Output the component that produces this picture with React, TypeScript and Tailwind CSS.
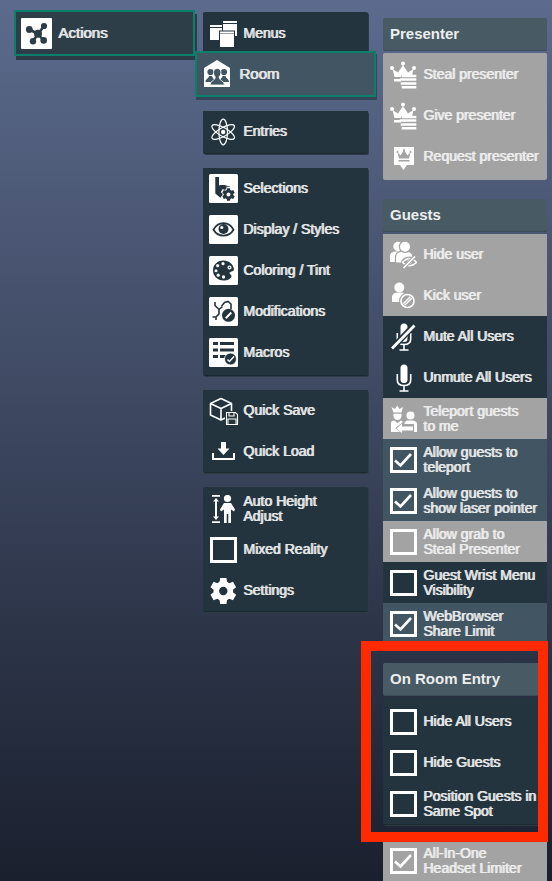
import type { ReactNode } from 'react';

const DARK = '#24343e';
const GRAY = '#a3a3a3';

function Icon({ children, className = 'size-7', size = 28 }: { children: ReactNode; className?: string; size?: number }) {
  return (
    <svg viewBox={`0 0 ${size} ${size}`} className={`${className} shrink-0`} fill="#fff" aria-hidden="true">
      {children}
    </svg>
  );
}

function Tile({ children }: { children: ReactNode }) {
  return (
    <Icon size={29} className="size-[29px] -mr-px">
      <rect width="29" height="29" rx="1.5" />
      {children}
    </Icon>
  );
}

const GEAR_TEETH = [0, 60, 120, 180, 240, 300];

function Gear({ cx, cy, r, hole, color, holeColor }: { cx: number; cy: number; r: number; hole: number; color: string; holeColor: string }) {
  return (
    <g transform={`translate(${cx} ${cy})`}>
      {GEAR_TEETH.map((a) => (
        <path
          key={a}
          transform={`rotate(${a})`}
          fill={color}
          d={`M${-r * 0.3} ${-r * 0.6}L${-r * 0.24} ${-r}H${r * 0.24}L${r * 0.3} ${-r * 0.6}Z`}
        />
      ))}
      <circle r={r * 0.76} fill={color} />
      <circle r={hole} fill={holeColor} />
    </g>
  );
}

const ActionsIcon = () => (
  <Icon size={31} className="size-[31px]">
    <rect width="31" height="31" rx="1" />
    <g stroke="#2d3d48" strokeWidth="2.6" fill="#2d3d48">
      <path d="M8.5 11.5L17 16L23 8M12 23L17 16L22.5 22.5" fill="none" />
      <g stroke="none">
        <circle cx="8.3" cy="11.5" r="3.4" />
        <circle cx="23" cy="8" r="3.1" />
        <circle cx="12" cy="23.2" r="3.2" />
        <circle cx="22.7" cy="22.4" r="3.3" />
        <circle cx="17" cy="15.7" r="4" />
      </g>
    </g>
  </Icon>
);

const MenusIcon = () => (
  <Icon>
    <path d="M1 5H14V20H1ZM14 1H28V16H14Z" />
    <path d="M1 7.500H13M14 3.500H28" stroke={DARK} />
    <path d="M13.500 4V11" stroke={DARK} />
    <rect x="10" y="10.500" width="16" height="17.500" fill={DARK} />
    <path d="M11 11.500H25V27H11Z" />
    <path d="M11 13.500H25" stroke="#9ba3a8" />
  </Icon>
);

const RoomIcon = () => (
  <Icon>
    <path d="M0 8L13 0L26 8V27H0Z" />
    <g fill="#425563">
      <circle cx="6.5" cy="12" r="3.1" />
      <path d="M1.5 22C1.5 18.5 5 18.5 5 16H8C8 18 11 19 11 22Z" />
      <circle cx="20" cy="12" r="3.1" />
      <path d="M15.500 22C15.500 18.500 18.500 18.500 18.500 16H21.500C21.500 18 25 19 25 22Z" />
      <path d="M6 25C6 20.500 11.300 21 11.300 17C8 13 9.500 8.500 13.200 8.500S18.500 13 15 17C15 21 20.500 20.500 20.500 25Z" stroke="#fff" strokeWidth=".8" />
    </g>
  </Icon>
);

const AtomIcon = () => (
  <Icon>
    <g fill="none" stroke="#fff" strokeWidth="1.200" transform="translate(14.200 14)">
      <ellipse rx="4.300" ry="12.800" />
      <ellipse rx="4.300" ry="12.800" transform="rotate(60)" />
      <ellipse rx="4.300" ry="12.800" transform="rotate(-60)" />
      <circle r="2.200" fill="#fff" stroke="none" />
    </g>
  </Icon>
);

const SelectionsIcon = () => (
  <Tile>
    <path fill={DARK} d="M6.300 3H10V11.500C14 10.500 17 11.500 21 12.500V23.500H11L6.300 19.500Z" />
    <Gear cx={19.5} cy={20.5} r={7.8} hole={0} color="#fff" holeColor="#fff" />
    <Gear cx={19.5} cy={20.5} r={6.3} hole={2} color={DARK} holeColor="#fff" />
  </Tile>
);

const EyeIcon = () => (
  <Tile>
    <path d="M4.500 14.700C9 6 20 6 24.500 14.700C20 22.500 9 22.500 4.500 14.700Z" fill="none" stroke={DARK} strokeWidth="1.800" />
    <circle cx="14.500" cy="14" r="5" fill={DARK} />
    <circle cx="12.800" cy="12.500" r="1.500" />
  </Tile>
);

const PaletteIcon = () => (
  <Tile>
    <path fill={DARK} d="M14.500 4.500C8 4.500 4 9 4 14.500S8.500 24.500 14.500 24.500C19 24.500 22.500 22.500 22.500 20C22.500 18.500 20.500 18.500 20.500 17C20.500 15.500 25 16 25 13C24 8 20 4.500 14.500 4.500Z" />
    <circle cx="14" cy="7.700" r="1.600" />
    <circle cx="8.700" cy="9.700" r="1.600" />
    <circle cx="7" cy="14.800" r="1.500" />
    <circle cx="9.200" cy="19.200" r="1.600" />
    <circle cx="14.500" cy="21" r="1.700" />
    <circle cx="20.500" cy="11.500" r="2" />
    <circle cx="20.500" cy="11.500" r=".8" fill={DARK} />
  </Tile>
);

const ModificationsIcon = () => (
  <Tile>
    <g fill="none" stroke={DARK} strokeWidth="1.600">
      <path d="M6 5V8.500L10 12.500L13.500 9.500M10 12.500V17L7 20H3.500M7 20V23" />
      <path d="M13 9V8.500L15.500 5.500L19 4.500L22 7V12" />
    </g>
    <circle cx="19.500" cy="18.300" r="6.500" fill={DARK} />
    <path d="M16.800 21.300L22.300 15.500" stroke="#fff" strokeWidth="2" />
  </Tile>
);

const MacrosIcon = () => (
  <Tile>
    <path fill={DARK} d="M4 4H9V7H4ZM11 4H25V7H11ZM4 10.500H9V13.500H4ZM11 10.500H25V13.500H11ZM4 17H9V20H4ZM11 17H25V20H11Z" />
    <circle cx="21.500" cy="21" r="6" fill={DARK} stroke="#fff" strokeWidth=".8" />
    <path d="M18.500 21.500L20.500 23.500L25 18.500" fill="none" stroke="#fff" strokeWidth="1.500" />
  </Tile>
);

const QuickSaveIcon = () => (
  <Icon className="size-7 overflow-visible">
    <path d="M12 1.500L22.500 6.500V18L12 23L1.500 18V6.500ZM1.500 6.500L12 11.500L22.500 6.500M12 11.500V23" fill="none" stroke="#fff" strokeWidth="1.600" strokeLinejoin="round" />
    <path d="M16 14H29V29H16Z" fill={DARK} />
    <path d="M17.500 15.500H26.500L28.500 17.500V27.500H17.500ZM20 15.500V19H25V15.500M19 27V22H27V27" fill="none" stroke="#fff" strokeWidth="1.100" />
  </Icon>
);

const QuickLoadIcon = () => (
  <Icon>
    <path d="M12 4H17V10.500H20.500L14.500 17L8.500 10.500H12ZM3 15H5V20H24V15H26V22H3Z" />
  </Icon>
);

const HeightIcon = () => (
  <Icon>
    <path d="M3 0H11V1.800H3ZM3 26.200H11V28H3ZM7 3L10 6.500H8V21.500H10L7 25L4 21.500H6V6.500H4Z" />
    <circle cx="18.500" cy="3.500" r="3.600" />
    <path d="M15 8H22L26 14.500L25 16.500L22 14.500V28H19.300V19H17.700V28H15V14.500L12 16.500L11 14.500Z" />
  </Icon>
);

const SettingsIcon = () => (
  <Icon>
    <Gear cx={14.3} cy={14} r={13} hole={4.2} color="#fff" holeColor={DARK} />
  </Icon>
);

const CrownHandIcon = () => (
  <Icon>
    <circle cx="3" cy="7" r="2" />
    <circle cx="14" cy="2.500" r="2" />
    <circle cx="25" cy="7" r="2" />
    <path d="M3.500 8L9 11.500L14 4L19 11.500L24.500 8L23 14.500H12V16H5.500ZM5 18H12V20.500H5Z" />
    <path d="M14 15H26M12 18.500H26M13 22.500H26M14 26.200H26" stroke="#fff" strokeWidth="2.600" strokeLinecap="square" />
  </Icon>
);

const RequestIcon = () => (
  <Icon>
    <path d="M5 4H25V22H18L14.500 27L11 22H5Z" />
    <g fill={GRAY}>
      <path d="M8.500 9L11.500 12.500L15 7L18.500 12.500L21.500 9L20 15.500H10ZM9.500 17H20.500V18.500H9.500Z" />
      <circle cx="8.500" cy="9" r="1" />
      <circle cx="15" cy="7" r="1" />
      <circle cx="21.500" cy="9" r="1" />
    </g>
  </Icon>
);

const HideUserIcon = () => (
  <Icon>
    <circle cx="9" cy="5.500" r="4.700" />
    <path d="M1 21V15Q1 11 6 10.500H10V21Z" />
    <g stroke={GRAY} strokeWidth="1.200">
      <path d="M6.500 22V15.500Q7 11 12 10.500H19Q23.500 11 24 16V22Z" />
      <circle cx="16" cy="5.800" r="5.600" />
    </g>
    <ellipse cx="20.500" cy="21.500" rx="8.500" ry="6" fill={GRAY} />
    <path d="M13.500 21.500Q20.500 13.500 27.500 21.500Q20.500 28 13.500 21.500Z" fill="none" stroke="#fff" strokeWidth="1.500" />
    <circle cx="20.500" cy="21" r="2.200" />
    <path d="M14.500 27L26 15.500" stroke={GRAY} strokeWidth="3.500" />
    <path d="M14.500 27L26 15.500" stroke="#fff" strokeWidth="1.700" />
  </Icon>
);

const KickUserIcon = () => (
  <Icon>
    <circle cx="10.300" cy="5.500" r="5" />
    <path d="M3 20V14.500Q3.500 11 8 10.500H13Q18 11 18 15V20Z" />
    <circle cx="18.500" cy="19" r="8.500" fill={GRAY} />
    <circle cx="18.500" cy="19" r="6.500" fill="none" stroke="#fff" strokeWidth="1.700" />
    <path d="M15 22.500L22 15.500" stroke="#fff" strokeWidth="3.500" />
    <path d="M15 22.500L22 15.500" stroke={GRAY} strokeWidth="1" />
  </Icon>
);

const Mic = () => (
  <>
    <rect x="11.500" y="0.500" width="7" height="18.500" rx="3.500" />
    <path d="M8.300 10V16Q8.300 21.500 15 21.500Q21.700 21.500 21.700 16V10M15 21.500V27M10.500 27H19.500" fill="none" stroke="#fff" strokeWidth="1.600" />
  </>
);

const MicOffIcon = () => (
  <Icon>
    <Mic />
    <path d="M2.500 26L25.500 2" stroke={DARK} strokeWidth="6" />
    <path d="M3 25.500L25.500 2.500" stroke="#fff" strokeWidth="2.800" />
  </Icon>
);

const MicIcon = () => (
  <Icon>
    <Mic />
  </Icon>
);

const TeleportIcon = () => (
  <Icon>
    <path d="M2.500 2L6 4L8.300 0.500L10.500 4L14 2L12.500 7.500H4.500Z" />
    <path d="M4.500 8.800H12.500V11Q12 15 8.500 15T4.500 11Z" />
    <path d="M2 27V18Q2 15.500 5 15.500L8.500 18L12 15.500L14 17L6.500 23L11 27Z" />
    <circle cx="21.500" cy="10.500" r="4" />
    <path d="M15.500 19V18Q16 15.500 19 15.500H24Q28 16 28 19V27H25V19Z" />
    <path d="M7.500 23.500L13 18.500V21.500H24V25.500H13V28Z" />
  </Icon>
);

type Tone = 'dark' | 'active' | 'disabled';

const TONES: Record<Tone, string> = {
  dark: 'bg-[#24343e] text-[#e6e8e8]',
  active: 'bg-[#425563] text-[#e6e8e8]',
  disabled: 'bg-[#a3a3a3] text-[#ededed]',
};

const THICK = '[text-shadow:1px_0_0_currentColor]';

const ROW = `flex h-[41px] w-full items-center gap-1.5 pl-1.5 text-left text-sm leading-[15px] ${THICK}`;

function Item({ icon, label, tone = 'dark' }: { icon: ReactNode; label: string; tone?: Tone }) {
  return (
    <button type="button" disabled={tone === 'disabled'} className={`${ROW} ${TONES[tone]}`}>
      {icon}
      <span className="whitespace-pre">{label}</span>
    </button>
  );
}

function Check({ label, tone = 'dark', checked = false }: { label: string; tone?: Tone; checked?: boolean }) {
  return (
    <label className={`${ROW} ${TONES[tone]}`}>
      <span className="grid size-7 shrink-0 place-items-center">
        <input
          type="checkbox"
          defaultChecked={checked}
          disabled={tone === 'disabled'}
          className="peer col-start-1 row-start-1 h-[26px] w-[27px] appearance-none border-3 border-white"
        />
        <svg viewBox="0 0 28 28" className="pointer-events-none invisible col-start-1 row-start-1 size-7 peer-checked:visible" aria-hidden="true">
          <path d="M6 14.500L11.500 19.500L22 8" fill="none" stroke="#fff" strokeWidth="2.600" />
        </svg>
      </span>
      <span className="whitespace-pre">{label}</span>
    </label>
  );
}

function Group({ children, className = '' }: { children: ReactNode; className?: string }) {
  return <div className={`rounded-[2px] border-b border-black/20 bg-[#24343e] shadow-[1px_1px_0_#2d3b46] ${className}`}>{children}</div>;
}

function Header({ children }: { children: ReactNode }) {
  return <h2 className="mb-[3px] flex h-8 items-center rounded-[2px] bg-[#485a63] pl-[7px] text-[15px] leading-5 font-bold text-[#eceeee] shadow-[0_1px_0_#3c4c58]">{children}</h2>;
}

export default function App() {
  return (
    <main className="grid h-screen grid-cols-[181fr_165fr_171fr] items-start gap-2 overflow-hidden bg-linear-to-b from-[#5c6b8d] via-[#3b455d] to-[#1a202e] pr-[5px] pl-[14px] font-['Liberation_Sans',Arial,sans-serif]">
      <nav className="pt-[10px]" aria-label="Main">
        <button type="button" className={`flex h-[46px] w-full items-center gap-1.5 border-2 border-[#0b7f69] bg-[#2e3e49] pl-[5px] text-left text-[15px] leading-5 text-[#e6e8e8] shadow-[2px_4px_0_#2d3b48] ${THICK}`}>
          <ActionsIcon />
          Actions
        </button>
      </nav>

      <nav className="pt-3" aria-label="Actions">
        <Group className="pt-px">
          <Item icon={<MenusIcon />} label="Menus" />
        </Group>
        <button type="button" className={`relative -mx-2 -mt-1 flex h-[46px] w-[calc(100%+16px)] items-center gap-[7px] border-2 border-[#0b7f69] bg-[#425563] pl-[7px] text-left text-[15px] leading-5 text-[#e6e8e8] shadow-[1px_3px_0_#37475a] ${THICK}`}>
          <RoomIcon />
          Room
        </button>
        <div className="flex flex-col gap-[14px] pt-[14px]">
          <Group className="pb-px">
            <Item icon={<AtomIcon />} label="Entries" />
          </Group>
          <Group className="pb-[2px]">
            <Item icon={<SelectionsIcon />} label="Selections" />
            <Item icon={<EyeIcon />} label="Display / Styles" />
            <Item icon={<PaletteIcon />} label="Coloring / Tint" />
            <Item icon={<ModificationsIcon />} label="Modifications" />
            <Item icon={<MacrosIcon />} label="Macros" />
          </Group>
          <Group>
            <Item icon={<QuickSaveIcon />} label="Quick Save" />
            <Item icon={<QuickLoadIcon />} label="Quick Load" />
          </Group>
          <Group className="pt-px">
            <Item icon={<HeightIcon />} label={'Auto Height\nAdjust'} />
            <Check label="Mixed Reality" />
            <Item icon={<SettingsIcon />} label="Settings" />
          </Group>
        </div>
      </nav>

      <div className="flex flex-col pt-[18px] pl-[7px]">
        <section>
          <Header>Presenter</Header>
          <div className="rounded-[2px] bg-[#a3a3a3] pt-px pb-[3px]">
            <Item tone="disabled" icon={<CrownHandIcon />} label="Steal presenter" />
            <Item tone="disabled" icon={<CrownHandIcon />} label="Give presenter" />
            <Item tone="disabled" icon={<RequestIcon />} label="Request presenter" />
          </div>
        </section>

        <section className="mt-[19px]">
          <Header>Guests</Header>
          <Item tone="disabled" icon={<HideUserIcon />} label="Hide user" />
          <Item tone="disabled" icon={<KickUserIcon />} label="Kick user" />
          <Item icon={<MicOffIcon />} label="Mute All Users" />
          <Item icon={<MicIcon />} label="Unmute All Users" />
          <Item tone="disabled" icon={<TeleportIcon />} label={'Teleport guests\nto me'} />
          <Check tone="active" checked label={'Allow guests to\nteleport'} />
          <Check tone="active" checked label={'Allow guests to\nshow laser pointer'} />
          <Check tone="disabled" label={'Allow grab to\nSteal Presenter'} />
          <Check label={'Guest Wrist Menu\nVisibility'} />
          <Check tone="active" checked label={'WebBrowser\nShare Limit'} />
        </section>

        <section className="relative mt-[19px]">
          <Header>On Room Entry</Header>
          <Group className="pt-[3px]">
            <Check label="Hide All Users" />
            <Check label="Hide Guests" />
            <Check label={'Position Guests in\nSame Spot'} />
          </Group>
          <div className="pointer-events-none absolute -top-[22px] -right-px -bottom-[17px] -left-[22px] border-10 border-[#ff2a00]" />
        </section>

        <div className="mt-[15px]">
          <Check tone="disabled" checked label={'All-In-One\nHeadset Limiter'} />
        </div>
      </div>
    </main>
  );
}
